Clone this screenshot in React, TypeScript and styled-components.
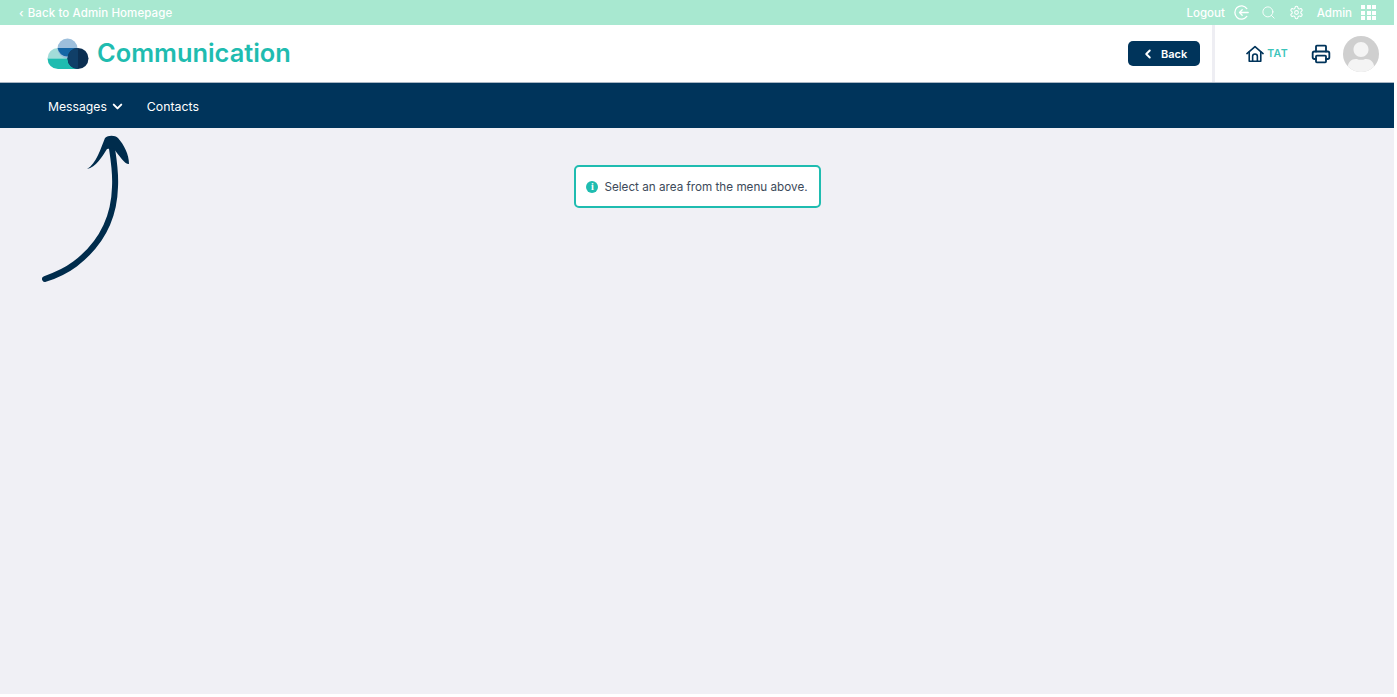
import styled, { createGlobalStyle } from "styled-components";
import { LuSearch, LuSettings, LuPrinter, LuChevronDown, LuChevronLeft } from "react-icons/lu";
import { FaUser } from "react-icons/fa";

const GlobalStyle = createGlobalStyle`
  html, body {
    margin: 0;
    padding: 0;
    background: #ffffff;
    overflow: hidden;
  }
  * {
    box-sizing: border-box;
  }
`;

const Page = styled.div`
  background-color: #f0f0f5;
  display: flex;
  flex-direction: column;
  font-family: Inter, "Noto Sans", sans-serif;
  height: 694px;
  position: relative;
  width: 1394px;
`;

const TopBar = styled.div`
  align-items: center;
  background-color: #a8e8d0;
  color: #ffffff;
  display: flex;
  font-size: 11.5px;
  font-weight: 500;
  height: 25px;
  justify-content: space-between;
  padding: 0 18px 0 19px;
`;

const BackLink = styled.div`
  display: flex;
  gap: 4px;
  letter-spacing: 0.1px;
`;

const TopTools = styled.div`
  align-items: center;
  display: flex;
`;

const ToolLabel = styled.span<{ $gap: number }>`
  margin-right: ${(p) => p.$gap}px;
`;

const ToolIcon = styled.span<{ $gap: number }>`
  display: flex;
  font-size: 15px;
  margin-right: ${(p) => p.$gap}px;
`;

const Dots = styled.div`
  display: grid;
  gap: 1.5px;
  grid-template-columns: repeat(3, 4px);
  grid-template-rows: repeat(3, 4px);
`;

const Dot = styled.i`
  background-color: #ffffff;
  display: block;
`;

const Header = styled.div`
  align-items: center;
  background-color: #ffffff;
  border-bottom: 1px solid #a9b6c4;
  display: flex;
  height: 58px;
  justify-content: space-between;
  padding-left: 47px;
`;

const Brand = styled.div`
  align-items: center;
  display: flex;
  gap: 8px;
`;

const Title = styled.h1`
  color: #1fbcb0;
  font-size: 25.4px;
  font-weight: 600;
  margin: 0;
  position: relative;
  top: -1px;
`;

const HeaderRight = styled.div`
  align-items: center;
  display: flex;
  height: 100%;
`;

const BackButton = styled.button`
  align-items: center;
  background-color: #00345b;
  border: none;
  border-radius: 5px;
  color: #ffffff;
  display: flex;
  font-family: inherit;
  font-size: 11px;
  font-weight: 600;
  gap: 6px;
  height: 25px;
  justify-content: center;
  margin-right: 12px;
  width: 72px;
`;

const Divider = styled.div`
  background-color: #eeeef3;
  height: 100%;
  width: 3px;
`;

const HomeLink = styled.div`
  align-items: center;
  color: #00345b;
  display: flex;
  margin-left: 31px;
`;

const HomeLabel = styled.span`
  color: #3cc4ba;
  font-size: 10.5px;
  font-weight: 600;
  letter-spacing: 0.4px;
  margin-left: 3px;
`;

const Printer = styled.div`
  color: #00345b;
  display: flex;
  font-size: 20px;
  margin-left: 23px;
`;

const Avatar = styled.div`
  align-items: flex-end;
  background-color: #cfcfcf;
  border-radius: 50%;
  color: #f4f4f4;
  display: flex;
  font-size: 30px;
  height: 36px;
  justify-content: center;
  margin: 0 15px 0 12px;
  overflow: hidden;
  width: 36px;
`;

const Nav = styled.nav`
  align-items: center;
  background-color: #00345b;
  color: #ffffff;
  display: flex;
  font-size: 12.2px;
  font-weight: 400;
  gap: 22px;
  height: 45px;
  padding: 1px 0 0 48px;
`;

const NavItem = styled.div`
  align-items: center;
  display: flex;
  gap: 3px;
`;

const ContactsLabel = styled.span`
  font-size: 12.3px;
`;

const Main = styled.main`
  display: flex;
  flex: 1;
  justify-content: center;
  padding-top: 37px;
`;

const Notice = styled.div`
  align-items: center;
  background-color: #ffffff;
  border: 2px solid #1fbcb0;
  border-radius: 5px;
  color: #3d4a5a;
  display: flex;
  font-size: 11.7px;
  gap: 6px;
  height: 43px;
  justify-content: center;
  width: 247px;
`;

const InfoBadge = styled.span`
  align-items: center;
  background-color: #1fbcb0;
  border-radius: 50%;
  color: #ffffff;
  display: flex;
  font-family: "Liberation Serif", serif;
  font-size: 10px;
  font-weight: 700;
  height: 12px;
  justify-content: center;
  width: 12px;
`;

const Arrow = styled.svg`
  left: 40px;
  position: absolute;
  top: 132px;
`;

const Logo = () => (
  <svg width="42" height="32" viewBox="0 0 42 32">
    <path d="M11 10 H30 V20.5 H0.5 A10.5 10.5 0 0 1 11 10 Z" fill="#a2dcd9" />
    <circle cx="20.5" cy="10.5" r="10" fill="#9dbfdc" />
    <path d="M10.6 10 H30.4 A10 10 0 0 1 10.6 10 Z" fill="#1566a6" />
    <path d="M0.5 20.5 H30 V31 H11 A10.5 10.5 0 0 1 0.5 20.5 Z" fill="#1fbcb0" />
    <circle cx="31" cy="20.5" r="10.5" fill="#0b2f52" />
    <path d="M31 10 A10.5 10.5 0 0 0 31 31 Z" fill="#103f68" />
  </svg>
);

const LogoutIcon = () => (
  <svg width="15" height="15" viewBox="0 0 15 15" fill="none" stroke="#ffffff" strokeWidth="1.3" strokeLinecap="round" strokeLinejoin="round">
    <path d="M12.8 3.6 A6.6 6.6 0 1 0 12.8 11.4" />
    <path d="M14.2 7.5 H5.5 M8.2 4.8 L5.5 7.5 L8.2 10.2" />
  </svg>
);

const HomeIcon = () => (
  <svg width="18" height="18" viewBox="0 0 19 18" fill="none" stroke="#00345b" strokeWidth="1.7" strokeLinecap="round" strokeLinejoin="round">
    <path d="M1 8.5 L9.5 1.2 L18 8.5" />
    <path d="M3.4 7 V16.6 H15.6 V7" />
    <path d="M7 16.6 V11.5 A2.5 2.5 0 0 1 12 11.5 V16.6" />
  </svg>
);

const App = () => {
  return (
    <Page>
      <GlobalStyle />
      <TopBar>
        <BackLink>
          <span>‹</span>
          <span>Back to Admin Homepage</span>
        </BackLink>
        <TopTools>
          <ToolLabel $gap={9}>Logout</ToolLabel>
          <ToolIcon $gap={12}><LogoutIcon /></ToolIcon>
          <ToolIcon $gap={13}><LuSearch strokeWidth={1.4} /></ToolIcon>
          <ToolIcon $gap={13}><LuSettings strokeWidth={1.7} /></ToolIcon>
          <ToolLabel $gap={9}>Admin</ToolLabel>
          <Dots>
            {Array.from({ length: 9 }, (_, i) => (
              <Dot key={i} />
            ))}
          </Dots>
        </TopTools>
      </TopBar>
      <Header>
        <Brand>
          <Logo />
          <Title>Communication</Title>
        </Brand>
        <HeaderRight>
          <BackButton>
            <LuChevronLeft size={14} strokeWidth={3.4} />
            Back
          </BackButton>
          <Divider />
          <HomeLink>
            <HomeIcon />
            <HomeLabel>TAT</HomeLabel>
          </HomeLink>
          <Printer><LuPrinter strokeWidth={2.2} /></Printer>
          <Avatar><FaUser /></Avatar>
        </HeaderRight>
      </Header>
      <Nav>
        <NavItem>
          Messages
          <LuChevronDown size={15} strokeWidth={3.2} />
        </NavItem>
        <NavItem>
          <ContactsLabel>Contacts</ContactsLabel>
        </NavItem>
      </Nav>
      <Main>
        <Notice>
          <InfoBadge>i</InfoBadge>
          Select an area from the menu above.
        </Notice>
      </Main>
      <Arrow width="95" height="155" viewBox="0 0 95 155" fill="none">
        <path d="M5 147 C17 143 27 138 35 132 C56 116 74 92 75 55 C76 38 73 24 71 10" stroke="#002c4c" strokeWidth="6" strokeLinecap="round" />
        <path d="M47 37 C56 32 61 16 65 6 C68 3 75 3 78 6 C84 13 89 22 89 32 C84 32 80 24 73 16 L67 17 C62 25 56 35 47 37 Z" fill="#002c4c" />
      </Arrow>
    </Page>
  );
};

export default App;
